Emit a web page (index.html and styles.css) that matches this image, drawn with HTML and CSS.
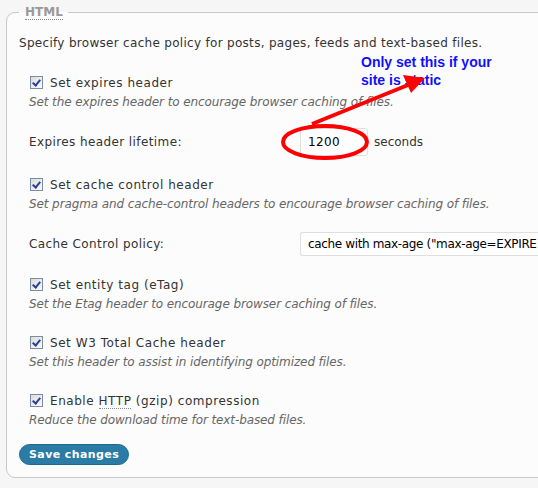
FILE: index.html
```html
<!DOCTYPE html>
<html lang="en">
<head>
    <meta charset="UTF-8">
    <title>Browser Cache</title>
    <link rel="stylesheet" href="styles.css">
</head>
<body>
    <fieldset class="box">
        <legend><abbr title="Hypertext Markup Language">HTML</abbr></legend>
        <p class="intro">Specify browser cache policy for posts, pages, feeds and text-based files.</p>

        <div class="opts">
            <div class="opt">
                <label><span class="check"></span>Set expires header</label>
                <p class="desc">Set the expires header to encourage browser caching of files.</p>
            </div>
            <div class="field lifetime">
                <span class="name">Expires header lifetime:</span>
                <span class="input">1200</span>
                <span class="unit">seconds</span>
            </div>
            <div class="opt">
                <label><span class="check"></span>Set cache control header</label>
                <p class="desc">Set pragma and cache-control headers to encourage browser caching of files.</p>
            </div>
            <div class="field policy">
                <span class="name">Cache Control policy:</span>
                <span class="select">cache with max-age ("max-age=EXPIRE</span>
            </div>
            <div class="opt">
                <label><span class="check"></span>Set entity tag (eTag)</label>
                <p class="desc">Set the Etag header to encourage browser caching of files.</p>
            </div>
            <div class="opt">
                <label><span class="check"></span>Set W3 Total Cache header</label>
                <p class="desc">Set this header to assist in identifying optimized files.</p>
            </div>
            <div class="opt">
                <label><span class="check"></span>Enable <abbr title="Hypertext Transfer Protocol">HTTP</abbr> (gzip) compression</label>
                <p class="desc">Reduce the download time for text-based files.</p>
            </div>
        </div>

        <button type="button" class="btn">Save changes</button>
    </fieldset>

    <!-- annotation drawn over the screenshot -->
    <div class="note">Only set this if your<br>site is static</div>
    <svg class="marks" width="538" height="488" viewBox="0 0 538 488">
        <ellipse cx="325" cy="142" rx="42" ry="16" fill="none" stroke="#ff0000" stroke-width="4"/>
        <line x1="312" y1="124" x2="408" y2="85" stroke="#ff0000" stroke-width="4"/>
        <polygon points="425,78 403,75 411,93" fill="#ff0000"/>
    </svg>
</body>
</html>
```

FILE: styles.css
```css
* {
    margin: 0;
    padding: 0;
    box-sizing: border-box;
}

body {
    background: #f6f6f6;
    font-family: "DejaVu Sans", Verdana, sans-serif;
    font-size: 12px;
    color: #333;
    width: 538px;
    height: 488px;
    overflow: hidden;
    position: relative;
}

.box {
    margin: 3px 0 0 6px;
    width: 620px;
    height: 475px;
    border: 1px solid #c8c8c8;
    border-radius: 9px;
    padding: 0 0 0 12px;
    background: #fcfcfc;
}

.box legend {
    padding: 0 5px 0 6px;
    font-weight: bold;
    color: #999;
    line-height: 19px;
}

abbr {
    text-decoration: none;
    border-bottom: 1px dotted #888;
}

.intro {
    margin-top: 12px;
    line-height: 19px;
    letter-spacing: 0.3px;
}

.opts {
    display: flex;
    flex-direction: column;
    gap: 20px;
    margin: 21px 0 0 10px;
}

.opt label {
    display: block;
    line-height: 19px;
    letter-spacing: 0.55px;
}

.check {
    display: inline-block;
    vertical-align: -2px;
    width: 13px;
    height: 13px;
    margin: 0 7px 0 1px;
    border: 1px solid #7a8ca6;
    background: linear-gradient(135deg, #dcdcd6, #fbfbf8);
    position: relative;
}

.check::after {
    content: "";
    position: absolute;
    left: 3px;
    top: 1px;
    width: 3px;
    height: 6px;
    border: solid #2a3ea0;
    border-width: 0 2px 2px 0;
    transform: rotate(40deg);
}

.desc {
    font-style: italic;
    color: #666;
    line-height: 19px;
    letter-spacing: -0.1px;
}

.field {
    display: flex;
    align-items: center;
    letter-spacing: 0.4px;
}

.field .name {
    width: 271px;
}

.lifetime {
    height: 28px;
    margin-top: -4px;
}

.input {
    width: 68px;
    height: 28px;
    line-height: 26px;
    padding-left: 7px;
    border: 1px solid #dfdfdf;
    border-radius: 3px;
    background: #fff;
    color: #000;
}

.unit {
    margin-left: 6px;
    letter-spacing: 0;
}

.policy {
    height: 24px;
    margin-top: -2px;
}

.select {
    width: 238px;
    height: 24px;
    line-height: 22px;
    padding-left: 7px;
    border: 1px solid #dfdfdf;
    border-right: 0;
    border-radius: 3px 0 0 3px;
    background: #fff;
    color: #000;
    white-space: nowrap;
    overflow: hidden;
    letter-spacing: -0.35px;
}

.btn {
    margin-top: 14px;
    height: 21px;
    padding: 0 9px;
    border: 1px solid #1d6a8e;
    border-radius: 11px;
    background: #2a7ca6;
    color: #fff;
    font-family: "DejaVu Sans", Verdana, sans-serif;
    font-size: 11px;
    font-weight: bold;
    letter-spacing: 0.4px;
}

.note {
    position: absolute;
    left: 361px;
    top: 53px;
    font-family: "Liberation Sans", Arial, sans-serif;
    font-size: 14px;
    font-weight: bold;
    line-height: 18px;
    color: #1010ff;
}

.marks {
    position: absolute;
    left: 0;
    top: 0;
}
```
